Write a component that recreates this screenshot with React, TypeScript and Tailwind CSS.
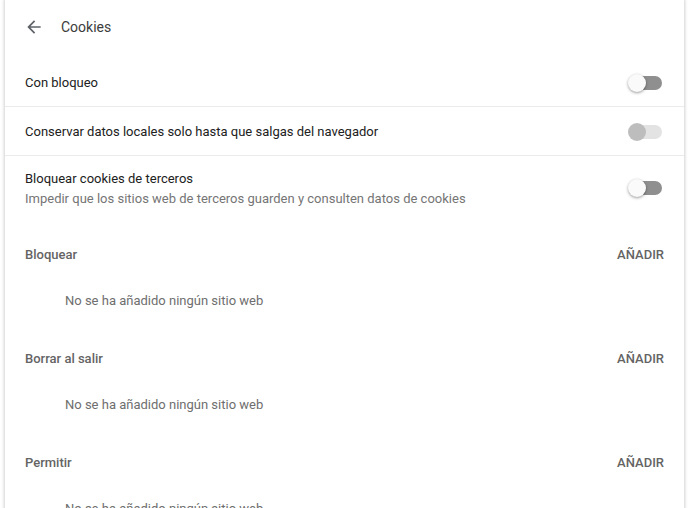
import React from "react";

function Toggle({ disabled = false }: { disabled?: boolean }) {
  return (
    <div className="relative mr-[2px] h-[14px] w-[32px] shrink-0">
      <div
        className={`absolute left-[2px] top-0 h-[14px] w-[30px] rounded-full ${
          disabled ? "bg-[#e3e3e3]" : "bg-[#8f8f8f]"
        }`}
      />
      <div
        className={`absolute left-[-2px] top-[-2px] h-[18px] w-[18px] rounded-full ${
          disabled
            ? "bg-[#bdbdbd]"
            : "bg-[#fafafa] shadow-[0_1px_3px_rgba(0,0,0,0.4)]"
        }`}
      />
    </div>
  );
}

function Section({ title }: { title: string }) {
  return (
    <div className="mb-[12px]">
      <div className="flex h-[44px] items-center justify-between pl-[20px] pr-[20px]">
        <span className="font-medium text-[#646464]">{title}</span>
        <span className="font-medium text-[#646464]">AÑADIR</span>
      </div>
      <div className="flex h-[48px] items-center pl-[60px] text-[#6e6e6e]">
        No se ha añadido ningún sitio web
      </div>
    </div>
  );
}

export default function App() {
  return (
    <div
      className="h-[508px] overflow-hidden bg-white pl-[5px] pr-[4px] text-[13px]"
      style={{ fontFamily: "Roboto, 'Liberation Sans', sans-serif" }}
    >
      <div className="min-h-[600px] bg-white shadow-[0_0_3px_1px_rgba(0,0,0,0.18)]">
        <div className="flex h-[54px] items-center pl-[19px]">
          <svg width="20" height="20" viewBox="0 0 24 24" className="shrink-0">
            <path
              fill="#5f6368"
              d="M20 11H7.83l5.59-5.59L12 4l-8 8 8 8 1.41-1.41L7.83 13H20v-2z"
            />
          </svg>
          <span className="ml-[17px] text-[14px] text-[#3c3c3c]">Cookies</span>
        </div>

        <div className="flex h-[53px] items-center justify-between border-b border-[#ebebeb] pt-[5px] pl-[20px] pr-[20px] text-[#212121]">
          <span>Con bloqueo</span>
          <Toggle />
        </div>

        <div className="flex h-[49px] items-center justify-between border-b border-[#ebebeb] pt-[2px] pl-[20px] pr-[20px] text-[#212121]">
          <span>Conservar datos locales solo hasta que salgas del navegador</span>
          <Toggle disabled />
        </div>

        <div className="flex h-[64px] items-center justify-between pl-[20px] pr-[20px]">
          <div className="flex flex-col pt-[1px]">
            <span className="text-[#212121]">Bloquear cookies de terceros</span>
            <span className="text-[#757575]">
              Impedir que los sitios web de terceros guarden y consulten datos de cookies
            </span>
          </div>
          <Toggle />
        </div>

        <div className="pt-[13px]">
          <Section title="Bloquear" />
          <Section title="Borrar al salir" />
          <Section title="Permitir" />
        </div>
      </div>
    </div>
  );
}
